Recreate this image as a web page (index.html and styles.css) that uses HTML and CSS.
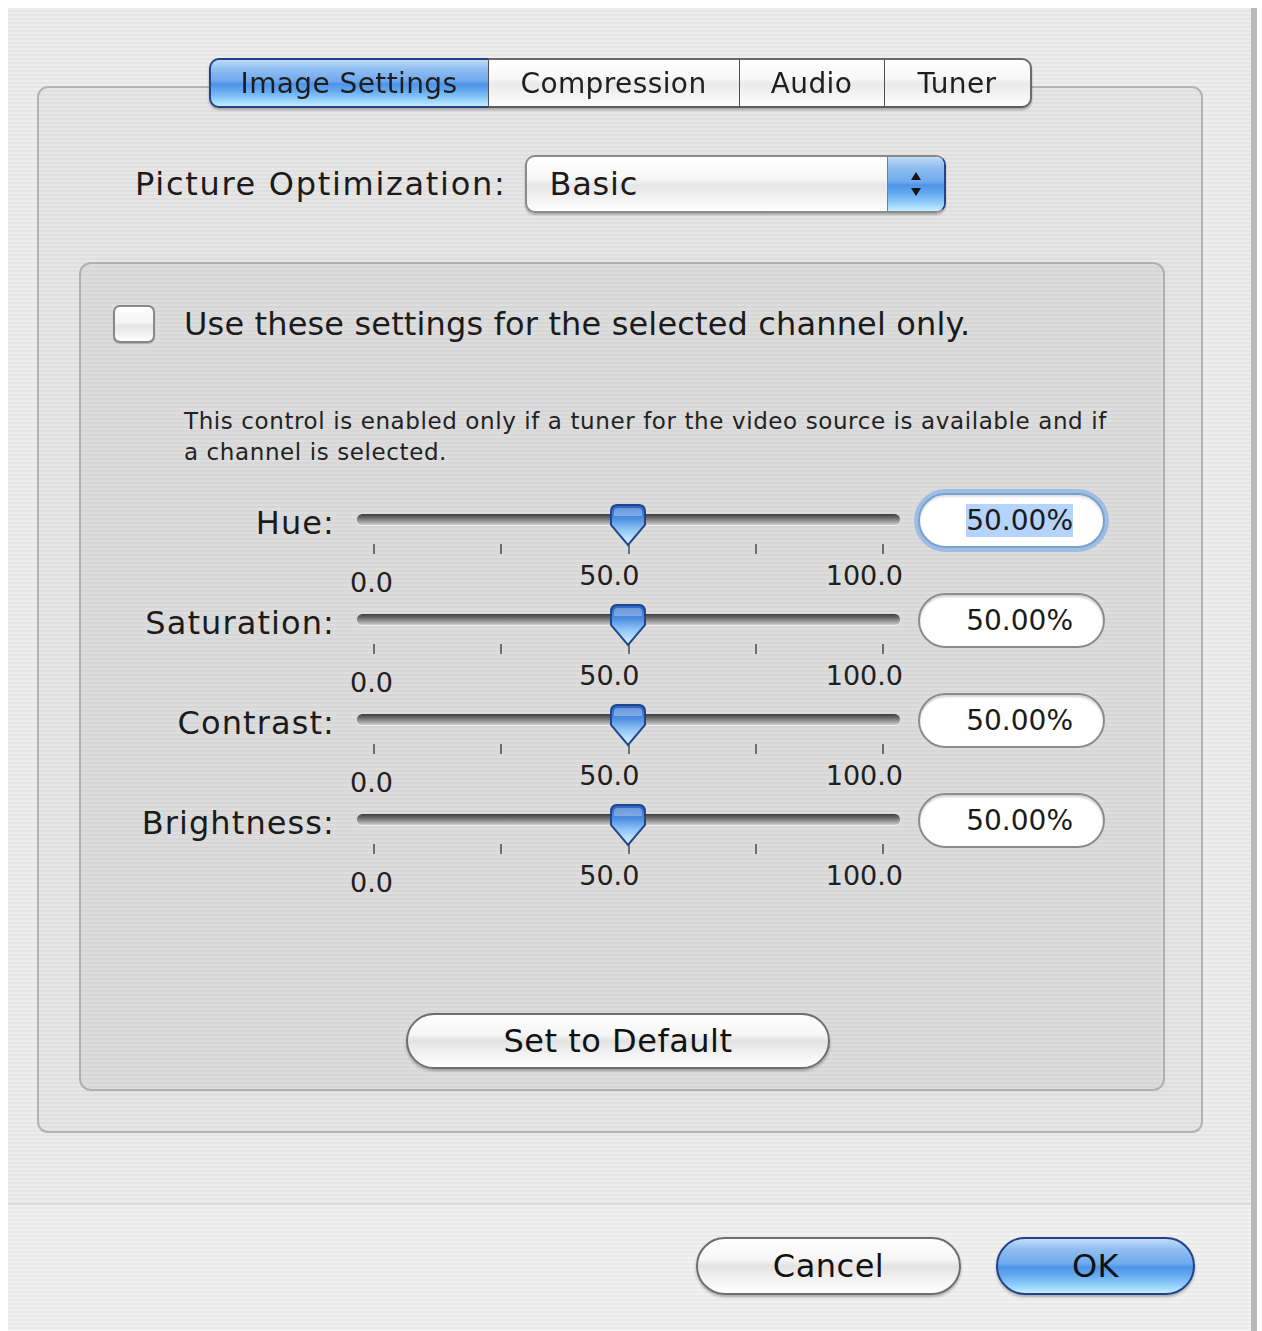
FILE: index.html
```
<!DOCTYPE html>
<html>
<head>
<meta charset="utf-8">
<title>Image Settings</title>
<link rel="stylesheet" href="styles.css">
</head>
<body>
<svg class="defs" width="0" height="0" aria-hidden="true">
  <defs>
    <linearGradient id="thumbGrad" x1="0" y1="0" x2="0" y2="1">
      <stop offset="0" stop-color="#2a63c4"/>
      <stop offset="0.35" stop-color="#4f8fe0"/>
      <stop offset="0.6" stop-color="#8cc3f5"/>
      <stop offset="1" stop-color="#e2f5ff"/>
    </linearGradient>
  </defs>
</svg>
<div class="window">
  <div class="tabbox">
    <div class="tabs">
      <div class="tab tab-image active">Image Settings</div>
      <div class="tab tab-comp">Compression</div>
      <div class="tab tab-audio">Audio</div>
      <div class="tab tab-tuner">Tuner</div>
    </div>

    <div class="opt-row">
      <span class="opt-label">Picture Optimization:</span>
      <div class="popup">
        <span class="popup-value">Basic</span>
        <span class="popup-arrows">
          <svg width="14" height="30" viewBox="0 0 14 30"><path d="M7 3 L12 11 H2 Z" fill="#151515"/><path d="M2 19 H12 L7 27 Z" fill="#151515"/></svg>
        </span>
      </div>
    </div>

    <div class="innerbox">
      <div class="check-row">
        <span class="checkbox"></span>
        <span class="check-label">Use these settings for the selected channel only.</span>
      </div>
      <p class="help">This control is enabled only if a tuner for the video source is available and if<br>a channel is selected.</p>

      <div class="sliders">
        <div class="srow">
          <span class="slabel">Hue:</span>
          <div class="slider">
            <div class="track-wrap">
              <div class="track"></div>
              <svg class="thumb" width="38" height="45" viewBox="0 0 38 45"><path d="M8 2 H30 Q36 2 36 9 V22 L19 42 L2 22 V9 Q2 2 8 2 Z" fill="url(#thumbGrad)" stroke="#22468c" stroke-width="2"/><path d="M9 5 H29 Q33 5 33 9 V13 H5 V9 Q5 5 9 5 Z" fill="#ffffff" opacity="0.3"/></svg>
            </div>
            <div class="ticks"><i></i><i></i><i></i><i></i><i></i></div>
            <div class="scale"><span class="low">0.0</span><span>50.0</span><span>100.0</span></div>
          </div>
          <div class="field focus"><span class="sel">50.00%</span></div>
        </div>
        <div class="srow">
          <span class="slabel">Saturation:</span>
          <div class="slider">
            <div class="track-wrap">
              <div class="track"></div>
              <svg class="thumb" width="38" height="45" viewBox="0 0 38 45"><path d="M8 2 H30 Q36 2 36 9 V22 L19 42 L2 22 V9 Q2 2 8 2 Z" fill="url(#thumbGrad)" stroke="#22468c" stroke-width="2"/><path d="M9 5 H29 Q33 5 33 9 V13 H5 V9 Q5 5 9 5 Z" fill="#ffffff" opacity="0.3"/></svg>
            </div>
            <div class="ticks"><i></i><i></i><i></i><i></i><i></i></div>
            <div class="scale"><span class="low">0.0</span><span>50.0</span><span>100.0</span></div>
          </div>
          <div class="field"><span>50.00%</span></div>
        </div>
        <div class="srow">
          <span class="slabel">Contrast:</span>
          <div class="slider">
            <div class="track-wrap">
              <div class="track"></div>
              <svg class="thumb" width="38" height="45" viewBox="0 0 38 45"><path d="M8 2 H30 Q36 2 36 9 V22 L19 42 L2 22 V9 Q2 2 8 2 Z" fill="url(#thumbGrad)" stroke="#22468c" stroke-width="2"/><path d="M9 5 H29 Q33 5 33 9 V13 H5 V9 Q5 5 9 5 Z" fill="#ffffff" opacity="0.3"/></svg>
            </div>
            <div class="ticks"><i></i><i></i><i></i><i></i><i></i></div>
            <div class="scale"><span class="low">0.0</span><span>50.0</span><span>100.0</span></div>
          </div>
          <div class="field"><span>50.00%</span></div>
        </div>
        <div class="srow">
          <span class="slabel">Brightness:</span>
          <div class="slider">
            <div class="track-wrap">
              <div class="track"></div>
              <svg class="thumb" width="38" height="45" viewBox="0 0 38 45"><path d="M8 2 H30 Q36 2 36 9 V22 L19 42 L2 22 V9 Q2 2 8 2 Z" fill="url(#thumbGrad)" stroke="#22468c" stroke-width="2"/><path d="M9 5 H29 Q33 5 33 9 V13 H5 V9 Q5 5 9 5 Z" fill="#ffffff" opacity="0.3"/></svg>
            </div>
            <div class="ticks"><i></i><i></i><i></i><i></i><i></i></div>
            <div class="scale"><span class="low">0.0</span><span>50.0</span><span>100.0</span></div>
          </div>
          <div class="field"><span>50.00%</span></div>
        </div>
      </div>

      <div class="default-row">
        <button class="btn btn-default">Set to Default</button>
      </div>
    </div>
  </div>

  <div class="footer">
    <button class="btn btn-cancel">Cancel</button>
    <button class="btn btn-ok">OK</button>
  </div>
</div>
</body>
</html>
```
FILE: styles.css
```
html, body {
  margin: 0;
  padding: 0;
  background: #ffffff;
}

body {
  font-family: "DejaVu Sans", "Liberation Sans", sans-serif;
  color: #1b1b1b;
}

.defs {
  display: block;
  width: 0;
  height: 0;
  overflow: hidden;
}

.window {
  margin: 8px 0 0 8px;
  width: 1243px;
  height: 1323px;
  border-right: 6px solid #b9b9b9;
  background: repeating-linear-gradient(to bottom, #ededed 0px, #ededed 2px, #e6e6e6 2px, #e6e6e6 4px);
  overflow: hidden;
}

/* ---------- Tab box ---------- */
.tabbox {
  box-sizing: border-box;
  margin: 78px 0 0 29px;
  width: 1166px;
  height: 1047px;
  border: 2px solid #b3b3b3;
  border-radius: 11px;
  background: repeating-linear-gradient(to bottom, #e6e6e6 0px, #e6e6e6 2px, #dfdfdf 2px, #dfdfdf 4px);
}

.tabs {
  display: flex;
  justify-content: center;
  margin-top: -30px;
  height: 50px;
  filter: drop-shadow(0 2px 1px rgba(0, 0, 0, 0.28));
}

.tab {
  box-sizing: border-box;
  height: 50px;
  display: flex;
  align-items: center;
  justify-content: center;
  font-size: 28px;
  letter-spacing: 0.4px;
  color: #1e1e1e;
  border-top: 2px solid #6a6a6a;
  border-bottom: 2px solid #5d5d5d;
  border-left: 1px solid #4f4f4f;
  background: linear-gradient(to bottom, #ffffff 0%, #f7f7f7 40%, #e9e9e9 52%, #f1f1f1 70%, #fdfdfd 100%);
}

.tab:first-child {
  border-left: 2px solid #6a6a6a;
  border-radius: 10px 0 0 10px;
}

.tab:last-child {
  border-right: 2px solid #6a6a6a;
  border-radius: 0 10px 10px 0;
}

.tab-image { width: 279px; }
.tab-comp { width: 251px; }
.tab-audio { width: 145px; }
.tab-tuner { width: 148px; }

.tab.active {
  border-color: #22428a;
  background: linear-gradient(to bottom, #c2dbf7 0%, #92c0f1 18%, #6ea9ed 46%, #4d92e7 52%, #62a8ef 66%, #93cffb 86%, #c6eeff 100%);
}

/* ---------- Picture optimization ---------- */
.opt-row {
  display: flex;
  align-items: center;
  height: 58px;
  margin-top: 47px;
  padding-left: 96px;
  gap: 19px;
}

.opt-label {
  font-size: 32px;
  letter-spacing: 1.7px;
}

.popup {
  box-sizing: border-box;
  display: flex;
  width: 421px;
  height: 58px;
  border: 2px solid #8a8a8a;
  border-right-color: #22428a;
  border-radius: 10px;
  overflow: hidden;
  background: linear-gradient(to bottom, #ffffff 0%, #f7f7f7 40%, #e6e6e6 52%, #efefef 70%, #ffffff 100%);
  box-shadow: 0 2px 2px rgba(0, 0, 0, 0.25);
}

.popup-value {
  flex: 1;
  display: flex;
  align-items: center;
  padding-left: 22px;
  font-size: 32px;
  letter-spacing: 0.8px;
}

.popup-arrows {
  width: 56px;
  display: flex;
  align-items: center;
  justify-content: center;
  border-left: 1px solid #5a83c4;
  background: linear-gradient(to bottom, #c2dbf7 0%, #92c0f1 18%, #6ea9ed 46%, #4d92e7 52%, #62a8ef 66%, #93cffb 86%, #c6eeff 100%);
}

/* ---------- Inner box ---------- */
.innerbox {
  box-sizing: border-box;
  height: 829px;
  margin: 49px 36px 0 40px;
  padding: 41px 0 0 32px;
  border: 2px solid #b0b0b0;
  border-radius: 12px;
  background: repeating-linear-gradient(to bottom, #dddddd 0px, #dddddd 2px, #d7d7d7 2px, #d7d7d7 4px);
}

.check-row {
  display: flex;
  align-items: center;
  height: 38px;
  gap: 29px;
}

.checkbox {
  box-sizing: border-box;
  width: 42px;
  height: 38px;
  border: 2px solid #888888;
  border-radius: 7px;
  background: linear-gradient(to bottom, #ffffff 0%, #f4f4f4 45%, #e4e4e4 55%, #f2f2f2 80%, #ffffff 100%);
  box-shadow: 0 1px 1px rgba(0, 0, 0, 0.2);
}

.check-label {
  font-size: 32px;
  letter-spacing: 0.15px;
  white-space: nowrap;
}

.help {
  margin: 63px 0 0 71px;
  font-size: 23px;
  line-height: 31px;
  letter-spacing: 0.6px;
  white-space: nowrap;
  color: #222;
}

/* ---------- Sliders ---------- */
.sliders {
  margin-top: 25px;
}

.srow {
  display: flex;
  align-items: flex-start;
  height: 100px;
}

.slabel {
  width: 222px;
  margin-top: 10px;
  margin-right: 22px;
  line-height: 40px;
  font-size: 32px;
  letter-spacing: 1.1px;
  text-align: right;
}

.slider {
  width: 543px;
  margin-right: 18px;
}

.track-wrap {
  position: relative;
  box-sizing: border-box;
  height: 51px;
  padding-top: 21px;
}

.track {
  height: 11px;
  border-radius: 6px;
  background: linear-gradient(to bottom, #3c3c3c 0%, #6c6c6c 35%, #a5a5a5 75%, #cfcfcf 100%);
  box-shadow: 0 1px 0 rgba(255, 255, 255, 0.6);
}

.thumb {
  position: absolute;
  left: 252px;
  top: 10px;
}

.ticks {
  display: flex;
  justify-content: space-between;
  height: 12px;
  padding: 0 16px;
}

.ticks i {
  display: block;
  width: 2px;
  height: 10px;
  background: #6e6e6e;
}

.scale {
  display: flex;
  justify-content: space-between;
  margin: 0 -3px 0 -7px;
  font-size: 27px;
  line-height: 26px;
  color: #202020;
}

.scale span {
  margin-top: 7px;
}

.scale span.low {
  margin-top: 14px;
}

.field {
  box-sizing: border-box;
  width: 187px;
  height: 55px;
  display: flex;
  align-items: center;
  justify-content: flex-end;
  padding-right: 30px;
  border: 2px solid #8c8c8c;
  border-radius: 28px;
  background: #ffffff;
  font-size: 28px;
  box-shadow: inset 0 2px 2px rgba(0, 0, 0, 0.18);
}

.field.focus {
  border-color: #7b9fce;
  box-shadow: 0 0 0 4px #9dbde3, inset 0 2px 2px rgba(0, 0, 0, 0.12);
}

.field .sel {
  background: #b5d3fb;
}

/* ---------- Buttons ---------- */
.default-row {
  display: flex;
  justify-content: center;
  margin: 120px 0 0 -32px;
  padding-right: 8px;
}

.btn {
  box-sizing: border-box;
  height: 56px;
  border: 2px solid #6e6e6e;
  border-radius: 28px;
  padding: 0;
  font-family: "DejaVu Sans", "Liberation Sans", sans-serif;
  font-size: 32px;
  letter-spacing: 0.5px;
  color: #111111;
  background: linear-gradient(to bottom, #ffffff 0%, #f6f6f6 38%, #e2e2e2 50%, #ececec 64%, #fafafa 88%, #ffffff 100%);
  box-shadow: 0 2px 3px rgba(0, 0, 0, 0.28);
}

.btn-default {
  width: 424px;
}

.footer {
  box-sizing: border-box;
  display: flex;
  justify-content: flex-end;
  align-items: flex-start;
  gap: 35px;
  height: 128px;
  margin-top: 70px;
  padding: 32px 56px 0 0;
  border-top: 2px solid #dcdcdc;
  background: repeating-linear-gradient(to bottom, #f1f1f1 0px, #f1f1f1 2px, #eaeaea 2px, #eaeaea 4px);
}

.btn-cancel {
  width: 265px;
  height: 58px;
  border-radius: 29px;
}

.btn-ok {
  width: 199px;
  height: 58px;
  border-radius: 29px;
  border-color: #23428c;
  background: linear-gradient(to bottom, #c2dbf7 0%, #92c0f1 18%, #6ea9ed 46%, #4d92e7 52%, #62a8ef 66%, #93cffb 86%, #c6eeff 100%);
}
```
